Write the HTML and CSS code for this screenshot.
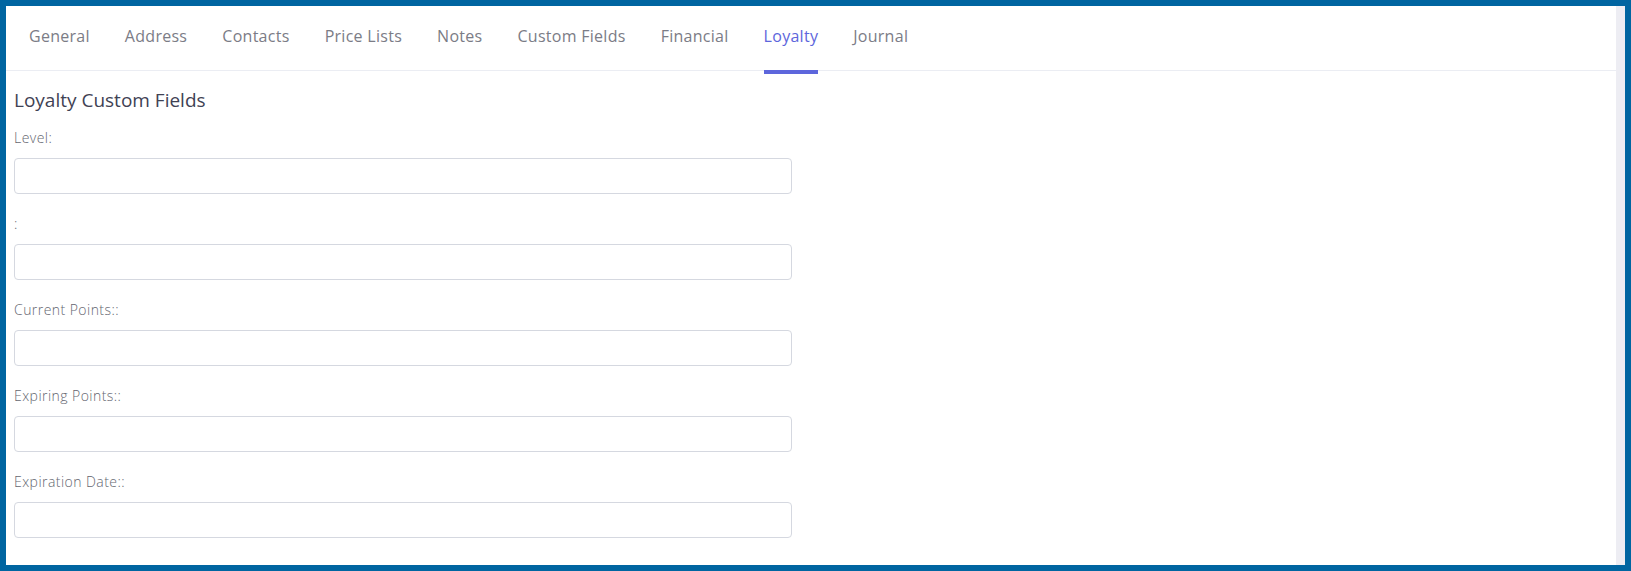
FILE: index.html
```html
<!DOCTYPE html>
<html lang="en">

<head>
  <meta charset="UTF-8">
  <meta name="viewport" content="width=device-width, initial-scale=1.0">
  <title>Customer - Loyalty</title>
  <link rel="stylesheet" href="styles.css">
</head>

<body>
  <div class="frame">
    <div class="panel">
      <nav class="tabs">
        <a href="#">General</a>
        <a href="#">Address</a>
        <a href="#">Contacts</a>
        <a href="#">Price Lists</a>
        <a href="#">Notes</a>
        <a href="#">Custom Fields</a>
        <a href="#">Financial</a>
        <a href="#" class="active">Loyalty</a>
        <a href="#">Journal</a>
      </nav>

      <div class="tab-content">
        <h3>Loyalty Custom Fields</h3>
        <div class="field">
          <label>Level:</label>
          <input type="text">
        </div>
        <div class="field">
          <label>:</label>
          <input type="text">
        </div>
        <div class="field">
          <label>Current Points::</label>
          <input type="text">
        </div>
        <div class="field">
          <label>Expiring Points::</label>
          <input type="text">
        </div>
        <div class="field">
          <label>Expiration Date::</label>
          <input type="text">
        </div>
      </div>
    </div>
    <div class="scroll-track"></div>
  </div>
</body>

</html>
```

FILE: styles.css
```css
body {
  margin: 0;
  padding: 0;
  font-family: 'Open Sans', Arial, sans-serif;
  background-color: #0065a1;
}

.frame {
  display: flex;
  height: 559px;
  border: 6px solid #0065a1;
  background-color: #fff;
  overflow: hidden;
}

.panel {
  flex: 1;
  background-color: #fff;
}

.scroll-track {
  width: 9px;
  background-color: #ededf3;
}

/* tabs */
.tabs {
  display: flex;
  gap: 35px;
  padding: 0 23px;
  border-bottom: 1px solid #ebedf3;
  height: 64px;
}

.tabs a {
  color: #7b7c86;
  text-decoration: none;
  font-size: 16px;
  letter-spacing: 0.28px;
  line-height: 22px;
  padding-top: 19px;
  border-bottom: 4px solid transparent;
  margin-bottom: -3px;
  box-sizing: border-box;
  height: 68px;
}

.tabs a.active {
  color: #5d66dc;
  border-bottom-color: #5d66dc;
}

/* content */
.tab-content {
  padding: 18px 8px 0;
}

.tab-content h3 {
  margin: 0 0 17px;
  font-size: 19px;
  line-height: 22px;
  font-weight: 500;
  color: #3f4254;
}

.field {
  margin-bottom: 20px;
}

.field label {
  display: block;
  font-size: 14px;
  letter-spacing: 0.45px;
  line-height: 20px;
  font-weight: 300;
  color: #64666f;
  margin-bottom: 10px;
}

.field input {
  display: block;
  width: 778px;
  height: 36px;
  box-sizing: border-box;
  border: 1px solid #d5d8e0;
  border-radius: 4px;
  background: #fff;
  padding: 0 12px;
  margin: 0;
}
```
